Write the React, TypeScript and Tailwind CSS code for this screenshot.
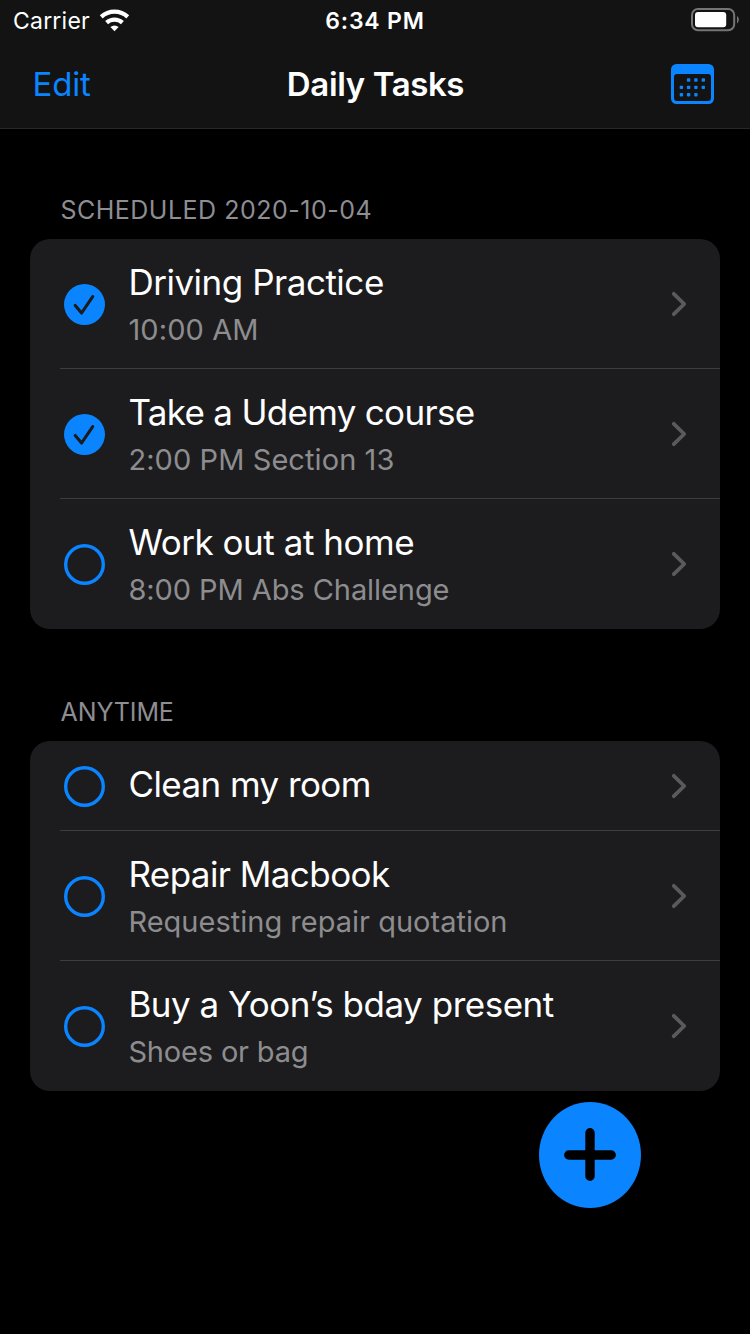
type Task = {
  title: string;
  titleClass: string;
  note?: string;
  noteClass?: string;
  done?: boolean;
};

const scheduled: Task[] = [
  { title: "Driving Practice", titleClass: "tracking-[-0.48px]", note: "10:00 AM", noteClass: "tracking-[0.1px]", done: true },
  { title: "Take a Udemy course", titleClass: "tracking-[-0.69px]", note: "2:00 PM Section 13", noteClass: "tracking-[0.08px]", done: true },
  { title: "Work out at home", titleClass: "tracking-[-0.46px]", note: "8:00 PM Abs Challenge", noteClass: "tracking-[-0.07px]" },
];

const anytime: Task[] = [
  { title: "Clean my room", titleClass: "tracking-[-0.57px]" },
  { title: "Repair Macbook", titleClass: "tracking-[-0.57px]", note: "Requesting repair quotation", noteClass: "tracking-[0.01px]" },
  { title: "Buy a Yoon’s bday present", titleClass: "tracking-[-0.48px]", note: "Shoes or bag", noteClass: "tracking-[-0.17px]" },
];

function WifiIcon() {
  return (
    <svg className="mb-0.5 ml-[9px] h-6 w-[31px]" viewBox="0 0 31 24" fill="none" stroke="#fff" strokeWidth="4.3">
      <path d="M2.25 8.8A19.8 19.8 0 0 1 28.75 8.8" />
      <path d="M7.6 14.7A11.85 11.85 0 0 1 23.4 14.7" />
      <path d="M15.5 23.3L11.4 19A6 6 0 0 1 19.6 19Z" fill="#fff" stroke="none" />
    </svg>
  );
}

function BatteryIcon() {
  return (
    <svg className="mb-0.5 h-6 w-[49px]" viewBox="0 0 49 24" fill="none">
      <rect x="1" y="1" width="42.2" height="21.3" rx="6" stroke="#757575" strokeWidth="2" />
      <rect x="4" y="4" width="31.2" height="15.2" rx="3" fill="#fff" />
      <path d="M46 8C48.4 9.4 48.4 14 46 15.4Z" fill="#757575" />
    </svg>
  );
}

function CalendarIcon() {
  const dots = [
    [17.6, 16], [24.9, 16], [32.3, 16],
    [10.4, 23.4], [17.6, 23.4], [24.9, 23.4], [32.3, 23.4],
    [10.4, 30.7], [17.6, 30.7], [24.9, 30.7],
  ];
  return (
    <svg className="h-10 w-[43px]" viewBox="0 0 43 40" fill="#0a84ff">
      <path
        fillRule="evenodd"
        d="M5.5 0H37.5A5.5 5.5 0 0 1 43 5.5V34.5A5.5 5.5 0 0 1 37.5 40H5.5A5.5 5.5 0 0 1 0 34.5V5.5A5.5 5.5 0 0 1 5.5 0ZM6 10A3 3 0 0 0 3 13V34A3 3 0 0 0 6 37H37A3 3 0 0 0 40 34V13A3 3 0 0 0 37 10Z"
      />
      {dots.map(([x, y]) => (
        <rect key={`${x}-${y}`} x={x - 1.7} y={y - 1.7} width="3.4" height="3.4" rx="0.8" />
      ))}
    </svg>
  );
}

function StatusCircle({ done }: { done?: boolean }) {
  return (
    <svg className="mt-px size-[41px] shrink-0" viewBox="0 0 41 41" fill="none">
      {done ? (
        <>
          <circle cx="20.5" cy="20.5" r="20.5" fill="#0a84ff" />
          <path d="M11.2 21.4L17.6 29L28.7 12.6" stroke="#1c1c1e" strokeWidth="3.1" strokeLinecap="round" strokeLinejoin="round" />
        </>
      ) : (
        <circle cx="20.5" cy="20.5" r="18.8" stroke="#0a84ff" strokeWidth="3.4" />
      )}
    </svg>
  );
}

function TaskRow({ task, last }: { task: Task; last: boolean }) {
  return (
    <li className={task.note ? "flex h-[130px] flex-col pl-[30px]" : "flex h-[90px] flex-col pl-[30px]"}>
      <div className="flex flex-1 pr-8 pl-1">
        <div className="flex h-full items-center">
          <StatusCircle done={task.done} />
        </div>
        <div className="ml-[23.4px] flex flex-1 flex-col whitespace-nowrap pt-[21px]">
          <span className={`text-[35px] leading-[44px] text-white ${task.titleClass}`}>{task.title}</span>
          {task.note && (
            <span className={`mt-2 text-[29px] leading-9 text-[#8d8d8f] ${task.noteClass}`}>{task.note}</span>
          )}
        </div>
        <div className="flex h-full items-center">
          <svg className="h-[26px] w-[18px]" viewBox="0 0 18 26" fill="none" stroke="#5a5a5e" strokeWidth="3.8" strokeLinecap="round" strokeLinejoin="round">
            <path d="M3.8 2.8L14.2 13L3.8 23.2" />
          </svg>
        </div>
      </div>
      <div className={last ? "h-px" : "h-px bg-[#3d3d41]"} />
    </li>
  );
}

function Section({ heading, headingClass, tasks }: { heading: string; headingClass: string; tasks: Task[] }) {
  return (
    <section className="px-[30px]">
      <h2 className={`text-[25px] leading-8 text-[#8d8d92] ${headingClass}`}>{heading}</h2>
      <ul className="mt-[13px] overflow-hidden rounded-[20px] bg-[#1c1c1e]">
        {tasks.map((task, i) => (
          <TaskRow key={task.title} task={task} last={i === tasks.length - 1} />
        ))}
      </ul>
    </section>
  );
}

export default function App() {
  return (
    <div className="relative h-[1334px] w-[750px] overflow-hidden bg-black font-['Inter','Liberation_Sans',sans-serif]">
      <header className="h-[129px] border-b border-[#29292a] bg-[#131313] text-white">
        <div className="grid h-10 grid-cols-[1fr_auto_1fr] items-center">
          <div className="flex items-center pl-[13px]">
            <span className="pt-px text-[23px] leading-10 tracking-[0.211px]">Carrier</span>
            <WifiIcon />
          </div>
          <span className="pt-px text-[23px] font-semibold leading-10 tracking-[0.78px]">6:34 PM</span>
          <div className="flex justify-end pr-[10px]">
            <BatteryIcon />
          </div>
        </div>
        <div className="grid h-[88px] grid-cols-[1fr_auto_1fr] items-center text-[33px] leading-[88px]">
          <button className="pl-[32.5px] text-left tracking-[-0.2px] text-[#0a84ff]">Edit</button>
          <h1 className="pl-px font-semibold tracking-[-0.379px]">Daily Tasks</h1>
          <div className="flex justify-end pr-9">
            <CalendarIcon />
          </div>
        </div>
      </header>
      <main className="flex flex-col gap-[67px] pt-[65px]">
        <Section heading="SCHEDULED 2020-10-04" headingClass="pl-[30.4px] tracking-[0.5px]" tasks={scheduled} />
        <Section heading="ANYTIME" headingClass="pl-[30.5px] tracking-[-0.1px]" tasks={anytime} />
      </main>
      <button aria-label="Add task" className="absolute top-[1102px] left-[539px] h-[106px] w-[102px]">
        <svg className="h-[106px] w-[102px]" viewBox="0 0 102 106" fill="none">
          <ellipse cx="51" cy="53" rx="51" ry="53" fill="#0a84ff" />
          <path d="M51 30.8V74.2M29.8 53H72.2" stroke="#000" strokeWidth="9.4" strokeLinecap="round" />
        </svg>
      </button>
    </div>
  );
}
